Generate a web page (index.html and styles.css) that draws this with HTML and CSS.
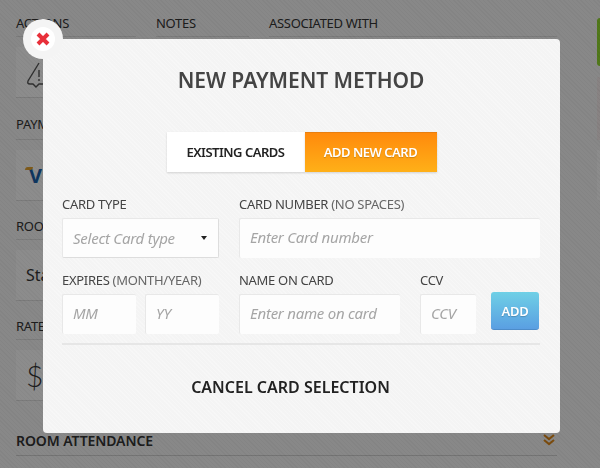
FILE: index.html
```html
<!DOCTYPE html>
<html lang="en">
<head>
    <meta charset="UTF-8">
    <meta name="viewport" content="width=device-width, initial-scale=1.0">
    <title>New Payment Method</title>
    <link rel="stylesheet" href="styles.css">
</head>
<body>
    <div class="page">
        <div class="page-main">
            <div class="top-row">
                <div class="col col-actions">
                    <div class="col-label">ACTIONS</div>
                    <div class="box">
                        <svg class="alert-icon" width="26" height="28" viewBox="0 0 26 28" fill="none" stroke="#555" stroke-width="1.4">
                            <path d="M13 2 L2 20 Q1 23 4 23 H7 L10 26 L13 23 H24"/>
                            <path d="M13 9 V16 M13 18 V20"/>
                        </svg>
                    </div>
                </div>
                <div class="col col-notes">
                    <div class="col-label">NOTES</div>
                </div>
                <div class="col col-assoc">
                    <div class="col-label">ASSOCIATED WITH</div>
                </div>
            </div>

            <div class="section section-first">
                <div class="col-label">PAYMENT</div>
                <div class="box"><span class="visa">V</span></div>
            </div>
            <div class="section">
                <div class="col-label">ROOM</div>
                <div class="box"><span class="box-text">Sta</span></div>
            </div>
            <div class="section">
                <div class="col-label">RATE</div>
                <div class="box"><span class="dollar">$</span></div>
            </div>

            <div class="attendance">
                <span>ROOM ATTENDANCE</span>
                <svg class="chevrons" width="12" height="12" viewBox="0 0 12 12" fill="none" stroke="#d9861a" stroke-width="2.2">
                    <path d="M1 1 L6 5 L11 1 M1 6 L6 10 L11 6"/>
                </svg>
            </div>
        </div>
        <div class="page-side">
            <div class="side-green"></div>
            <div class="side-grey"></div>
            <div class="side-box"></div>
        </div>
    </div>

    <div class="overlay"></div>

    <div class="modal">
        <div class="close-btn">
            <span class="close-inner">
                <svg width="14" height="14" viewBox="0 0 14 14" fill="none" stroke="#e8303a" stroke-width="4">
                    <path d="M2 2 L12 12 M12 2 L2 12"/>
                </svg>
            </span>
        </div>

        <h2>NEW PAYMENT METHOD</h2>

        <div class="tabs">
            <div class="tab">EXISTING CARDS</div>
            <div class="tab tab-active">ADD NEW CARD</div>
        </div>

        <form class="card-form">
            <div class="form-row">
                <div class="field field-type">
                    <label>CARD TYPE</label>
                    <div class="input select-box">
                        <span>Select Card type</span>
                        <span class="caret"></span>
                    </div>
                </div>
                <div class="field field-number">
                    <label>CARD NUMBER <span class="hint">(NO SPACES)</span></label>
                    <div class="input">Enter Card number</div>
                </div>
            </div>
            <div class="form-row">
                <div class="field field-type">
                    <label>EXPIRES <span class="hint">(MONTH/YEAR)</span></label>
                    <div class="expiry">
                        <div class="input">MM</div>
                        <div class="input">YY</div>
                    </div>
                </div>
                <div class="field field-name">
                    <label>NAME ON CARD</label>
                    <div class="input">Enter name on card</div>
                </div>
                <div class="field field-ccv">
                    <label>CCV</label>
                    <div class="input">CCV</div>
                </div>
                <button type="button" class="add-btn">ADD</button>
            </div>
        </form>

        <div class="cancel">CANCEL CARD SELECTION</div>
    </div>
</body>
</html>
```

FILE: styles.css
```css
* {
    box-sizing: border-box;
}
html, body {
    margin: 0;
    padding: 0;
    height: 468px;
    overflow: hidden;
}
body {
    font-family: "Noto Sans", Arial, sans-serif;
    background-color: #f0f0f0;
    color: #333;
}

/* page behind the dialog */
.page {
    display: flex;
    height: 468px;
    padding: 15px 0 0 16px;
}
.page-main {
    width: 541px;
}
.page-side {
    margin-left: 40px;
    padding-top: 3px;
    flex: 1;
}
.side-green {
    height: 48px;
    background-color: #8fd42e;
    border-radius: 3px 0 0 3px;
}
.side-grey {
    height: 63px;
    margin-top: 11px;
    background-color: #efe6e6;
}
.side-box {
    height: 50px;
    margin-top: 10px;
    background-color: #f6f6f6;
}
.top-row {
    display: flex;
}
.col-actions {
    width: 120px;
    margin-right: 20px;
}
.col-notes {
    width: 93px;
    margin-right: 20px;
}
.col-assoc {
    flex: 1;
}
.col-label {
    height: 22px;
    font-size: 13px;
    line-height: 17px;
    letter-spacing: -0.3px;
    border-bottom: 1px solid #d8d8d8;
}
.box {
    display: flex;
    align-items: center;
    height: 51px;
    margin-top: 10px;
    padding-left: 10px;
    background-color: #f7f7f7;
    border-bottom: 1px solid #d8d8d8;
}
.alert-icon {
    margin-top: 5px;
}
.section {
    margin-top: 17px;
}
.section-first {
    margin-top: 18px;
}
.section-first .col-label {
    height: 24px;
}
.visa {
    position: relative;
    margin-left: 3px;
    font-size: 20px;
    font-weight: 700;
    color: #1a5fa8;
}
.visa::before {
    content: "";
    position: absolute;
    top: 5px;
    left: -4px;
    width: 8px;
    height: 3px;
    background-color: #e0a030;
    border-radius: 3px 0 3px 0;
}
.box-text {
    font-size: 16px;
}
.dollar {
    font-family: "Lato", sans-serif;
    font-size: 30px;
    font-weight: 300;
}
.attendance {
    display: flex;
    justify-content: space-between;
    align-items: flex-start;
    margin-top: 30px;
    padding: 0 2px 4px 0;
    font-size: 14px;
    line-height: 20px;
    font-weight: 600;
    letter-spacing: -0.1px;
    border-bottom: 1px solid #ccc;
}
.chevrons {
    margin-top: 3px;
}

.overlay {
    position: fixed;
    top: 0;
    left: 0;
    right: 0;
    bottom: 0;
    background-color: rgba(0, 0, 0, 0.43);
    background-image: repeating-linear-gradient(45deg, rgba(0, 0, 0, 0.03) 0, rgba(0, 0, 0, 0.03) 1px, transparent 1px, transparent 3px);
}

/* dialog */
.modal {
    position: fixed;
    top: 39px;
    left: 43px;
    width: 517px;
    height: 394px;
    padding: 0 20px 0 19px;
    background-color: #f4f4f4;
    background-image: repeating-linear-gradient(45deg, rgba(255, 255, 255, 0.25) 0, rgba(255, 255, 255, 0.25) 1px, transparent 1px, transparent 3px);
    border-radius: 0 4px 4px 4px;
}
.close-btn {
    position: absolute;
    top: -20px;
    left: -20px;
    display: flex;
    align-items: center;
    justify-content: center;
    width: 40px;
    height: 40px;
    background-color: #f4f4f4;
    border-radius: 50%;
}
.close-inner {
    display: flex;
    align-items: center;
    justify-content: center;
    width: 24px;
    height: 24px;
    background-color: #fff;
    border-radius: 50%;
}
h2 {
    margin: 26px 0 0;
    text-align: center;
    font-size: 21px;
    line-height: 30px;
    font-weight: 600;
    letter-spacing: -0.05px;
    color: #444;
}
.tabs {
    display: flex;
    justify-content: center;
    margin-top: 37px;
    margin-left: 1px;
}
.tab {
    width: 138px;
    height: 40px;
    line-height: 40px;
    text-align: center;
    font-size: 13px;
    font-weight: 600;
    letter-spacing: -0.5px;
    color: #222;
    background-color: #fff;
    box-shadow: 0 1px 2px rgba(0, 0, 0, 0.15);
}
.tab-active {
    width: 132px;
    color: #fff;
    background: linear-gradient(#ff8a0c, #ffb018);
    border-top: 1px solid #e87f10;
    line-height: 38px;
    text-shadow: 0 1px 1px rgba(0, 0, 0, 0.2);
}
.card-form {
    margin-top: 22px;
}
.form-row {
    display: flex;
    margin-bottom: 12px;
}
.field label {
    display: block;
    height: 24px;
    font-size: 13px;
    line-height: 20px;
    letter-spacing: -0.3px;
    color: #444;
}
.hint {
    color: #666;
}
.field-type {
    width: 157px;
    margin-right: 20px;
}
.field-number {
    width: 301px;
}
.field-name {
    width: 161px;
    margin-right: 20px;
}
.field-ccv {
    width: 56px;
    margin-right: 15px;
}
.input {
    height: 40px;
    padding-left: 10px;
    line-height: 36px;
    font-size: 15px;
    font-style: italic;
    letter-spacing: -0.25px;
    color: #a5a5a5;
    background-color: #fdfdfd;
    border-top: 1px solid #e8e8e8;
    border-left: 1px solid #e8e8e8;
    border-radius: 2px;
}
.select-box {
    display: flex;
    justify-content: space-between;
    align-items: center;
    padding-right: 11px;
    border-right: 1px solid #ddd;
    border-bottom: 1px solid #ddd;
}
.caret {
    width: 0;
    height: 0;
    border-left: 3px solid transparent;
    border-right: 3px solid transparent;
    border-top: 4px solid #222;
}
.expiry {
    display: flex;
    justify-content: space-between;
}
.expiry .input {
    width: 74px;
}
.add-btn {
    align-self: flex-start;
    width: 48px;
    height: 38px;
    margin-top: 22px;
    padding: 0;
    font-family: inherit;
    font-size: 13px;
    font-weight: 600;
    letter-spacing: -0.2px;
    color: #fff;
    background: linear-gradient(#6fd0e6, #5a9fe2);
    border: none;
    border-bottom: 1px solid #4d8cc9;
    border-radius: 3px;
    text-shadow: 0 1px 1px rgba(0, 0, 0, 0.2);
}
.form-row:last-child {
    margin-bottom: 9px;
}
.cancel {
    padding: 30px 21px 0 0;
    border-top: 2px solid #e6e6e6;
    text-align: center;
    font-size: 16px;
    line-height: 24px;
    font-weight: 600;
    color: #222;
}
```
